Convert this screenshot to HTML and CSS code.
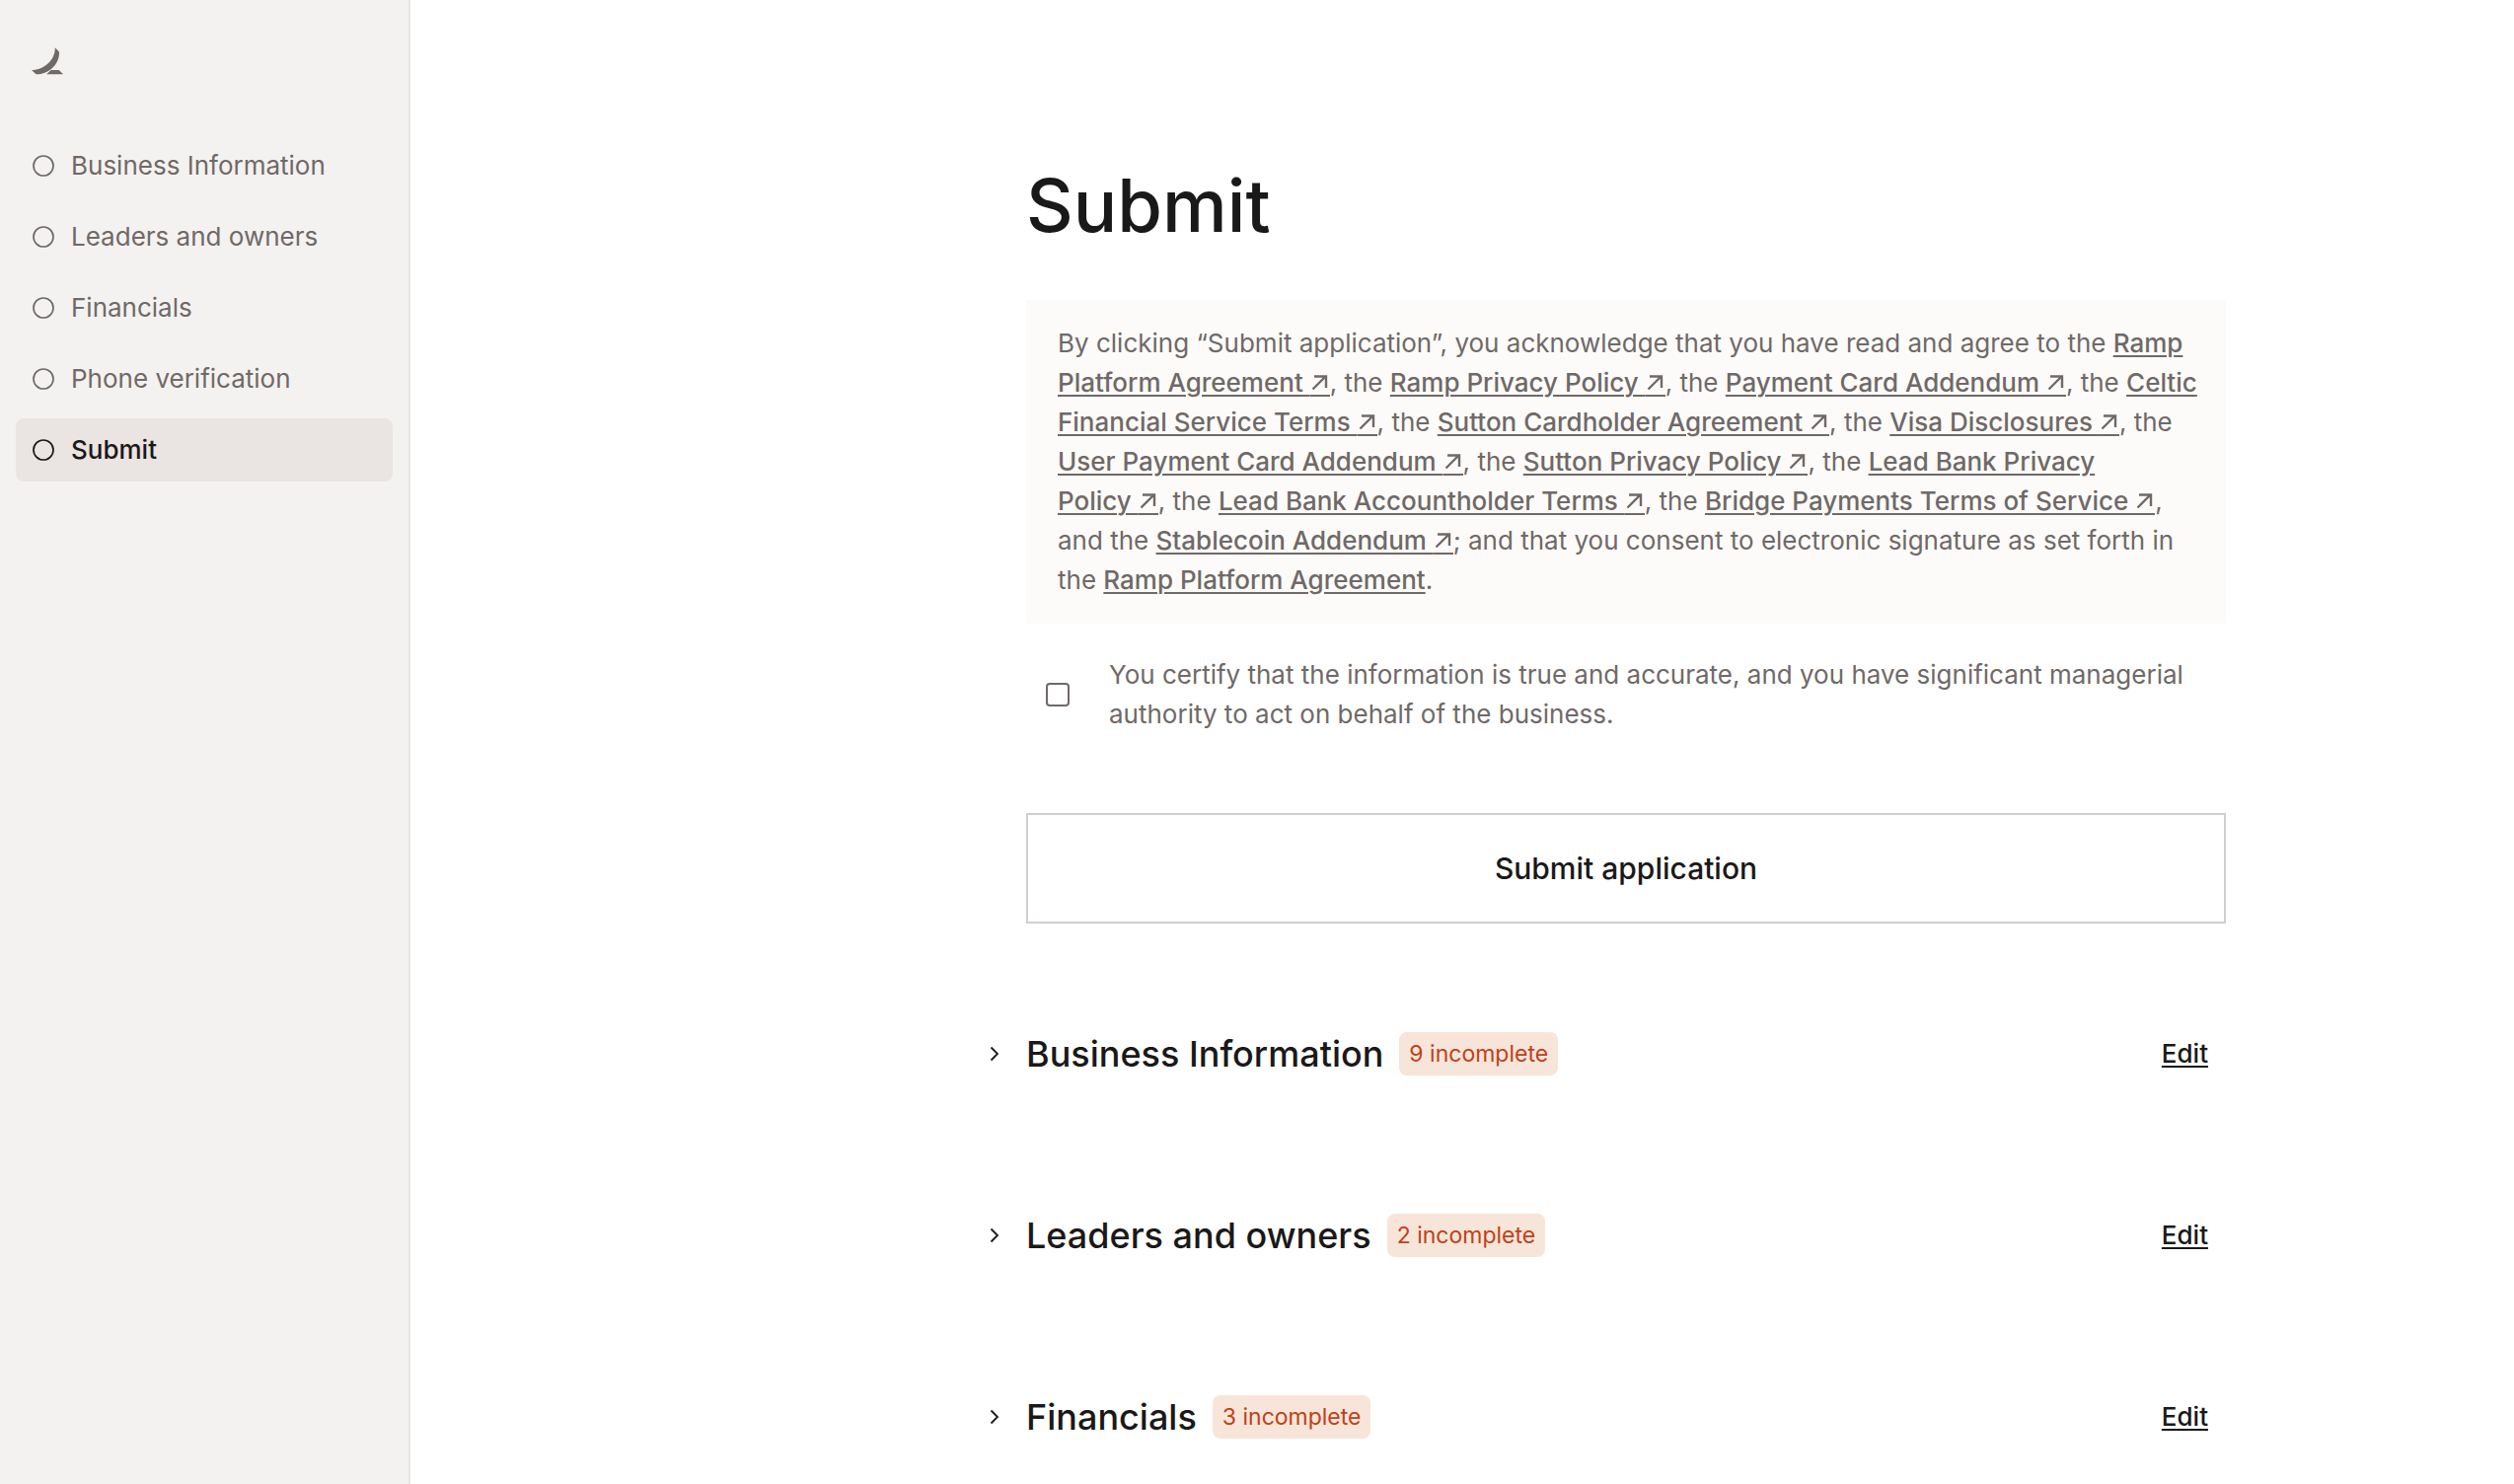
FILE: index.html
```html
<!DOCTYPE html>
<html lang="en">
<head>
    <meta charset="UTF-8">
    <meta name="viewport" content="width=device-width, initial-scale=1.0">
    <title>Submit - Application</title>
    <link rel="stylesheet" href="styles.css">
</head>
<body>
    <svg class="sprite" aria-hidden="true">
        <symbol id="circle" viewBox="0 0 22 22">
            <circle cx="11" cy="11" r="10" fill="none" stroke="currentColor" stroke-width="1.7"/>
        </symbol>
        <symbol id="external" viewBox="0 0 20 20">
            <path d="M2.500 14.500 15 2M4 1.500h12V13" fill="none" stroke="currentColor" stroke-width="2.400"/>
        </symbol>
        <symbol id="chevron" viewBox="0 0 10 16">
            <path d="M1.500 1.500 8 8l-6.500 6.500" fill="none" stroke="currentColor" stroke-width="1.800"/>
        </symbol>
    </svg>
    <aside class="sidebar">
        <a class="logo" href="#" aria-label="Home">
            <svg viewBox="0 0 30 26">
                <path d="M22.300 0C22.500 12 12 21 0 21.500L4.300 25.500C17 25.500 27 15 26.200 4Z"/>
                <path d="M18.500 21.500H26L30 25.500H14.200Z"/>
            </svg>
        </a>
        <nav class="steps">
            <a href="#"><svg class="circle"><use href="#circle"/></svg>Business Information</a>
            <a href="#"><svg class="circle"><use href="#circle"/></svg>Leaders and owners</a>
            <a href="#"><svg class="circle"><use href="#circle"/></svg>Financials</a>
            <a href="#"><svg class="circle"><use href="#circle"/></svg>Phone verification</a>
            <a class="active" href="#" aria-current="step"><svg class="circle"><use href="#circle"/></svg>Submit</a>
        </nav>
    </aside>
    <main class="main">
        <div class="content">
            <h1>Submit</h1>
            <form>
                <p class="terms">
                    By clicking “Submit application”, you acknowledge that you have read and agree to the <a href="#">Ramp<br>
                    Platform Agreement <svg class="external"><use href="#external"/></svg></a>, the <a href="#">Ramp Privacy Policy <svg class="external"><use href="#external"/></svg></a>, the <a href="#">Payment Card Addendum <svg class="external"><use href="#external"/></svg></a>, the <a href="#">Celtic<br>
                    Financial Service Terms <svg class="external"><use href="#external"/></svg></a>, the <a href="#">Sutton Cardholder Agreement <svg class="external"><use href="#external"/></svg></a>, the <a href="#">Visa Disclosures <svg class="external"><use href="#external"/></svg></a>, the<br>
                    <a href="#">User Payment Card Addendum <svg class="external"><use href="#external"/></svg></a>, the <a href="#">Sutton Privacy Policy <svg class="external"><use href="#external"/></svg></a>, the <a href="#">Lead Bank Privacy<br>
                    Policy <svg class="external"><use href="#external"/></svg></a>, the <a href="#">Lead Bank Accountholder Terms <svg class="external"><use href="#external"/></svg></a>, the <a href="#">Bridge Payments Terms of Service <svg class="external"><use href="#external"/></svg></a>,<br>
                    and the <a href="#">Stablecoin Addendum <svg class="external"><use href="#external"/></svg></a>; and that you consent to electronic signature as set forth in<br>
                    the <a href="#">Ramp Platform Agreement</a>.
                </p>
                <div class="certify">
                    <input type="checkbox" id="certify">
                    <label for="certify">You certify that the information is true and accurate, and you have significant managerial<br>
                    authority to act on behalf of the business.</label>
                </div>
                <button class="submit" type="submit">Submit application</button>
            </form>
            <div class="sections">
                <section class="section">
                    <button class="toggle" type="button" aria-label="Expand Business Information"><svg class="chevron"><use href="#chevron"/></svg></button>
                    <h2>Business Information</h2>
                    <span class="badge">9 incomplete</span>
                    <a class="edit" href="#">Edit</a>
                </section>
                <section class="section">
                    <button class="toggle" type="button" aria-label="Expand Leaders and owners"><svg class="chevron"><use href="#chevron"/></svg></button>
                    <h2>Leaders and owners</h2>
                    <span class="badge">2 incomplete</span>
                    <a class="edit" href="#">Edit</a>
                </section>
                <section class="section">
                    <button class="toggle" type="button" aria-label="Expand Financials"><svg class="chevron"><use href="#chevron"/></svg></button>
                    <h2>Financials</h2>
                    <span class="badge">3 incomplete</span>
                    <a class="edit" href="#">Edit</a>
                </section>
            </div>
        </div>
    </main>
</body>
</html>
```

FILE: styles.css
```css
* {
    box-sizing: border-box;
}
body {
    font-family: Inter, 'Liberation Sans', sans-serif;
    font-size: 26px;
    line-height: 40px;
    color: #6f6967;
    background: #fff;
    margin: 0;
    min-height: 100vh;
    display: flex;
}
.sprite {
    display: none;
}
.sidebar {
    flex: 0 0 416px;
    padding: 48px 16px;
    background: #f4f2f0;
    border-right: 2px solid #eae4e3;
}
.logo {
    display: block;
    margin: 0 16px 60px;
    color: #6f6967;
}
.logo svg {
    display: block;
    width: 32px;
    height: 28px;
    fill: currentColor;
}
.steps {
    display: flex;
    flex-direction: column;
    gap: 8px;
}
.steps a {
    display: flex;
    align-items: center;
    gap: 16px;
    height: 64px;
    padding: 0 16px;
    border-radius: 8px;
    color: inherit;
    text-decoration: none;
}
.steps a.active {
    background: #eae4e2;
    color: #1a1919;
    font-weight: 500;
}
.circle {
    width: 24px;
    height: 22px;
}
.main {
    flex: 1;
    display: grid;
    grid-template-columns: 624fr minmax(0, 1216fr) 292fr;
}
.content {
    grid-column: 2;
    padding-top: 160px;
}
h1 {
    margin: 0 0 48px;
    font-size: 74px;
    line-height: 96px;
    font-weight: 500;
    color: #1a1919;
}
.terms {
    margin: 0;
    padding: 24px 16px 24px 32px;
    background: #fcfbf9;
}
.terms a {
    color: inherit;
    font-weight: 500;
    text-underline-offset: 3px;
    text-decoration-thickness: 2px;
}
/* the border carries the link underline on below the arrow */
.external {
    width: 20px;
    height: 22px;
    border-bottom: 2px solid;
    vertical-align: -5px;
}
.certify {
    display: flex;
    align-items: center;
    gap: 40px;
    margin: 32px 0 80px;
    padding-left: 20px;
}
.certify input {
    appearance: none;
    flex: none;
    width: 24px;
    height: 24px;
    margin: 0;
    border: 2px solid #6f6967;
    border-radius: 4px;
}
.submit {
    width: 100%;
    height: 112px;
    background: #fff;
    border: 2px solid #d2cecb;
    font: inherit;
    font-size: 30px;
    font-weight: 500;
    color: #1a1919;
    cursor: pointer;
}
.sections {
    display: flex;
    flex-direction: column;
    gap: 120px;
    margin: 100px 0 0 -48px;
}
.section {
    display: flex;
    align-items: center;
    height: 64px;
    color: #1a1919;
}
.toggle {
    width: 48px;
    height: 48px;
    padding: 0 0 0 11px;
    background: none;
    border: none;
    color: inherit;
    text-align: left;
    cursor: pointer;
}
.chevron {
    display: block;
    width: 10px;
    height: 16px;
}
h2 {
    margin: 0 16px 0 0;
    font-size: 36px;
    line-height: 48px;
    font-weight: 500;
}
.badge {
    padding: 0 10px;
    border-radius: 8px;
    background: #f7e5da;
    color: #bf4119;
    font-size: 23px;
    line-height: 44px;
}
.edit {
    margin: 0 18px 0 auto;
    color: inherit;
    font-weight: 500;
    text-underline-offset: 3px;
    text-decoration-thickness: 2px;
}
```
